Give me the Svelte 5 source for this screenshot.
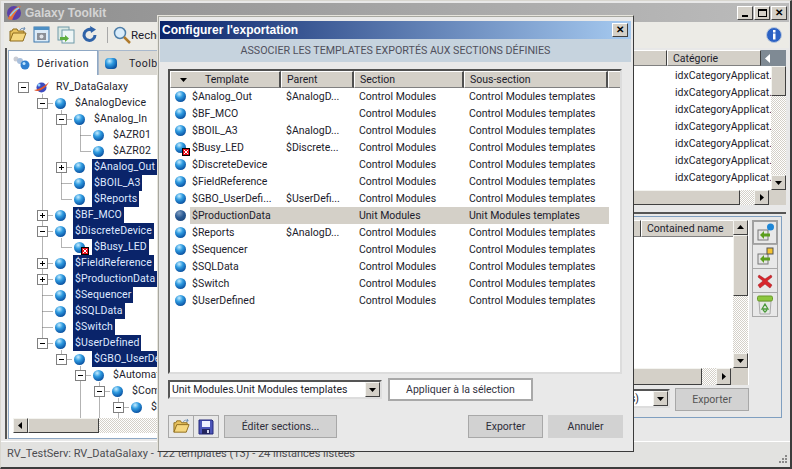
<script>
  const rowH = 16;
  const tree = [
    { level: 0, label: 'RV_DataGalaxy', box: '-', kind: 'galaxy' },
    { level: 1, label: '$AnalogDevice', box: '-' },
    { level: 2, label: '$Analog_In', box: '-' },
    { level: 3, label: '$AZR01' },
    { level: 3, label: '$AZR02' },
    { level: 2, label: '$Analog_Out', box: '+', sel: true },
    { level: 2, label: '$BOIL_A3', sel: true },
    { level: 2, label: '$Reports', sel: true },
    { level: 1, label: '$BF_MCO', box: '+', sel: true },
    { level: 1, label: '$DiscreteDevice', box: '-', sel: true },
    { level: 2, label: '$Busy_LED', sel: true, err: true },
    { level: 1, label: '$FieldReference', box: '+', sel: true },
    { level: 1, label: '$ProductionData', box: '+', sel: true },
    { level: 1, label: '$Sequencer', sel: true },
    { level: 1, label: '$SQLData', sel: true },
    { level: 1, label: '$Switch', sel: true },
    { level: 1, label: '$UserDefined', box: '-', sel: true },
    { level: 2, label: '$GBO_UserDefined', box: '-', sel: true },
    { level: 3, label: '$Automation', box: '-', tail: true },
    { level: 4, label: '$Common', box: '-', tail: true },
    { level: 5, label: '$Config', box: '-', tail: true }
  ];

  // connector lines of the tree, in px inside the tree area
  const boxX = (level) => 11 + 19 * level;
  const rowY = (i) => i * rowH + 8;
  const lines = [];
  tree.forEach((row, i) => {
    if (row.level === 0) return;
    const x = boxX(row.level);
    let j = i - 1;
    while (tree[j].level > row.level) j--;
    lines.push({ x1: x, y1: rowY(j), x2: x, y2: rowY(i) });
    lines.push({ x1: x, y1: rowY(i), x2: x + 11, y2: rowY(i) });
    if (row.tail) lines.push({ x1: x, y1: rowY(i), x2: x, y2: 400 });
  });

  const ctl = 'Control Modules';
  const ctlSub = 'Control Modules templates';
  const templates = [
    { name: '$Analog_Out', parent: '$AnalogD...', section: ctl, sub: ctlSub },
    { name: '$BF_MCO', parent: '', section: ctl, sub: ctlSub },
    { name: '$BOIL_A3', parent: '$AnalogD...', section: ctl, sub: ctlSub },
    { name: '$Busy_LED', parent: '$Discrete...', section: ctl, sub: ctlSub, err: true },
    { name: '$DiscreteDevice', parent: '', section: ctl, sub: ctlSub },
    { name: '$FieldReference', parent: '', section: ctl, sub: ctlSub },
    { name: '$GBO_UserDefi...', parent: '$UserDefi...', section: ctl, sub: ctlSub },
    { name: '$ProductionData', parent: '', section: 'Unit Modules', sub: 'Unit Modules templates', sel: true },
    { name: '$Reports', parent: '$AnalogD...', section: ctl, sub: ctlSub },
    { name: '$Sequencer', parent: '', section: ctl, sub: ctlSub },
    { name: '$SQLData', parent: '', section: ctl, sub: ctlSub },
    { name: '$Switch', parent: '', section: ctl, sub: ctlSub },
    { name: '$UserDefined', parent: '', section: ctl, sub: ctlSub }
  ];

  const categories = Array(7).fill('idxCategoryApplicat...');
</script>

{#snippet folder(size)}
  <svg width={size} height={size} viewBox="0 0 18 18">
    <path d="M1 15V5h2l1-2h4l1 2h6v2" fill="#e8c25e" stroke="#8d6b1c" />
    <path d="M1 15l3-8h13l-3 8z" fill="#f5d77f" stroke="#8d6b1c" />
    <path d="M11 4c1-2 3-2 5-1M16 3l-1-2M16 3l-2 1" fill="none" stroke="#6d8fb5" />
  </svg>
{/snippet}

{#snippet save()}
  <svg width="16" height="16" viewBox="0 0 16 16">
    <path d="M1 1h13l1 1v13H1z" fill="#4c55b8" stroke="#24297a" />
    <rect x="4" y="2" width="8" height="6" fill="#eef0ff" />
    <rect x="4" y="10" width="8" height="5" fill="#23255e" />
    <rect x="9" y="11" width="2" height="3" fill="#d5d8f0" />
  </svg>
{/snippet}

{#snippet badge()}
  <svg class="badge" width="8" height="8" viewBox="0 0 8 8">
    <rect width="8" height="8" fill="#000" />
    <rect x="1" y="1" width="6" height="6" fill="#e8101c" />
    <path d="M2 2l4 4M6 2l-4 4" stroke="#fff" />
  </svg>
{/snippet}

{#snippet arrow(dir)}
  <svg width="7" height="7" viewBox="0 0 7 7">
    {#if dir === 'up'}<path d="M0 5h7L3.5 1z" fill="#000" />{/if}
    {#if dir === 'down'}<path d="M0 2h7L3.5 6z" fill="#000" />{/if}
    {#if dir === 'left'}<path d="M5 0v7L1 3.5z" fill="#000" />{/if}
    {#if dir === 'right'}<path d="M2 0v7l4-3.5z" fill="#000" />{/if}
  </svg>
{/snippet}

<div class="window">
  <header class="titlebar">
    <svg width="16" height="16" viewBox="0 0 16 16">
      <circle cx="8" cy="8" r="7" fill="#5a3fa8" />
      <path d="M2 14C4 7 9 2 15 1 11 5 8 10 6 15z" fill="#e8743a" />
      <path d="M4 11c3-4 6-7 9-8" stroke="#8ad0f0" stroke-width="1.5" fill="none" />
    </svg>
    <span class="apptitle">Galaxy Toolkit</span>
    <div class="winbtns">
      <button class="winbtn"><i class="min"></i></button>
      <button class="winbtn"><i class="max"></i></button>
      <button class="winbtn close">✕</button>
    </div>
  </header>

  <div class="toolbar">
    <span class="tool">{@render folder(18)}</span>
    <span class="tool">
      <svg width="18" height="18" viewBox="0 0 18 18">
        <rect x="1" y="1" width="15" height="15" fill="#dcebf7" stroke="#3b77ac" />
        <rect x="1" y="1" width="15" height="3" fill="#4d8fc4" />
        <rect x="4" y="7" width="9" height="7" fill="#8b8f96" />
        <circle cx="8.5" cy="10.5" r="2" fill="#dfe3e8" />
      </svg>
    </span>
    <span class="tool">
      <svg width="18" height="18" viewBox="0 0 18 18">
        <rect x="1" y="1" width="11" height="13" fill="#dbe9e4" stroke="#6f9aa8" />
        <rect x="5" y="4" width="12" height="13" fill="#eef6f6" stroke="#6f9aa8" />
        <path d="M3 11h5V9l4 3.5L8 16v-2H3z" fill="#5fae3e" />
      </svg>
    </span>
    <span class="tool">
      <svg width="18" height="18" viewBox="0 0 18 18">
        <path d="M14 9a5.500 5.500 0 1 1-3-5" fill="none" stroke="#2f63a8" stroke-width="3" />
        <path d="M9 0l6 3.500-5 3.500z" fill="#2f63a8" />
      </svg>
    </span>
    <span class="toolsep"></span>
    <span class="tool search">
      <svg width="18" height="18" viewBox="0 0 18 18">
        <circle cx="7" cy="7" r="5.500" fill="#d9ecfa" stroke="#4e7ea8" stroke-width="1.500" />
        <path d="M11 11l6 6" stroke="#b07b2c" stroke-width="2.500" />
      </svg>
      Rechercher
    </span>
    <svg class="info" width="16" height="16" viewBox="0 0 16 16">
      <circle cx="8" cy="8" r="7.500" fill="#2c62c4" stroke="#b9c8de" />
      <rect x="7" y="6.500" width="2.500" height="6" fill="#fff" />
      <rect x="7" y="3" width="2.500" height="2.500" fill="#fff" />
    </svg>
  </div>

  <main class="body">
    <section class="leftpane">
      <div class="tabs">
        <div class="tab active">
          <svg width="18" height="14" viewBox="0 0 18 14">
            <circle cx="3" cy="3" r="2.500" fill="#c9ccd4" />
            <circle cx="7" cy="5" r="3" fill="#a9c0dc" />
            <circle cx="12" cy="9" r="4.500" fill="#2f80d0" />
            <circle cx="11" cy="7.500" r="1.500" fill="#bfe6ff" />
          </svg>
          Dérivation
        </div>
        <div class="tab">
          <span class="ball toolbox"></span>
          Toolbox
        </div>
      </div>
      <div class="treeframe">
        <div class="tree">
          <svg class="guides" width="400" height="400">
            {#each lines as l}
              <line x1={l.x1 + 0.5} y1={l.y1 + 0.5} x2={l.x2 + 0.5} y2={l.y2 + 0.5} stroke="#666" stroke-dasharray="1 1" />
            {/each}
          </svg>
          {#each tree as row}
            <div class="node" style="margin-left: {row.level * 19 + 6}px">
              <span class="boxcell">
                {#if row.box}
                  <span class="box">{#if row.box === '+'}<i class="vbar"></i>{/if}<i class="hbar"></i></span>
                {/if}
              </span>
              <span class="iconcell">
                {#if row.kind === 'galaxy'}
                  <svg width="15" height="13" viewBox="0 0 15 13">
                    <ellipse cx="7.500" cy="6.500" rx="5" ry="5" fill="#3d4bc0" />
                    <path d="M0 9C4 9 11 5 15 1 12 7 5 12 0 9z" fill="#e2562f" />
                    <circle cx="5" cy="4" r="1.500" fill="#8ed0ff" />
                  </svg>
                {:else}
                  <span class="ball"></span>
                  {#if row.err}{@render badge()}{/if}
                {/if}
              </span>
              <span class="nodelabel" class:sel={row.sel}>{row.label}</span>
            </div>
          {/each}
        </div>
        <div class="hscroll tree-h">
          <span class="sbtn">{@render arrow('left')}</span>
          <span class="thumb wide"></span>
          <span class="track"></span>
        </div>
      </div>
    </section>

    <section class="rightpane">
      <div class="catlist">
        <div class="cathead">
          <span class="headcell grow"></span>
          <span class="headcell catcol">Catégorie</span>
          <span class="headarrow">
            <svg width="7" height="9" viewBox="0 0 7 9"><path d="M6 0v9L1 4.500z" fill="#fff" /></svg>
          </span>
        </div>
        <div class="catbody">
          <div class="catrows">
            {#each categories as c}
              <div class="catrow">{c}</div>
            {/each}
          </div>
          <div class="vscroll">
            <span class="thumb catthumb"></span>
            <span class="track"></span>
            <span class="sbtn">{@render arrow('down')}</span>
          </div>
        </div>
        <div class="hscroll">
          <span class="thumb grow"></span>
          <span class="track short"></span>
          <span class="sbtn">{@render arrow('right')}</span>
          <span class="corner"></span>
        </div>
      </div>

      <div class="lower">
        <div class="groupbox">
          <div class="groupmain">
            <div class="instlist">
              <div class="instcontent">
                <div class="insthead">
                  <span class="headcell grow"></span>
                  <span class="headcell contained">Contained name</span>
                </div>
                <div class="instblank"></div>
              </div>
              <div class="vscroll inst">
                <span class="sbtn">{@render arrow('up')}</span>
                <span class="thumb instthumb"></span>
                <span class="track"></span>
                <span class="sbtn">{@render arrow('down')}</span>
              </div>
              <div class="hscroll insth">
                <span class="thumb grow"></span>
                <span class="track short"></span>
                <span class="sbtn">{@render arrow('right')}</span>
                <span class="corner"></span>
              </div>
            </div>
            <div class="exportrow">
              <div class="combo lowcombo">
                <span class="combotext">(toutes les instances)</span>
                <span class="sbtn">{@render arrow('down')}</span>
              </div>
              <button class="flat bordered lowexport">Exporter</button>
            </div>
          </div>
          <div class="sidebtns">
            <button class="side current">
              <svg width="20" height="20" viewBox="0 0 20 20">
                <rect x="3" y="7" width="10" height="10" fill="#e6e6e6" stroke="#777" />
                <path d="M5 12l4-4v2.500h6v3H9V16z" fill="#5c9e1e" />
                <circle cx="15.500" cy="4" r="3.500" fill="#1d86d6" />
              </svg>
            </button>
            <button class="side">
              <svg width="20" height="20" viewBox="0 0 20 20">
                <rect x="3" y="7" width="10" height="10" fill="#e6e6e6" stroke="#777" />
                <path d="M5 12l4-4v2.500h6v3H9V16z" fill="#5c9e1e" />
                <rect x="12" y="1" width="6" height="6" fill="#f5c330" stroke="#555" />
              </svg>
            </button>
            <button class="side">
              <svg width="18" height="18" viewBox="0 0 18 18">
                <path d="M3 3l6 4 6-4 1 2-5 4 5 4-2 3-5-4-5 4-2-3 5-4-5-4z" fill="#d8262c" stroke="#9a1a1e" stroke-width=".5" />
              </svg>
            </button>
            <button class="side">
              <svg width="18" height="20" viewBox="0 0 18 20">
                <path d="M3 6h12l-1 13H4z" fill="#e4e8e4" stroke="#aaa" />
                <rect x="1.500" y="1" width="15" height="5" rx="1.500" fill="#8cc63e" stroke="#6a9a2a" />
                <path d="M9 9l3 5H6zM7 15l2 2 2-2" fill="none" stroke="#4a9a3a" stroke-width="1.300" />
              </svg>
            </button>
          </div>
        </div>
      </div>
    </section>
  </main>

  <footer class="status">
    RV_TestServ: RV_DataGalaxy - 122 templates (13) - 24 instances listées
    <svg class="grip" width="11" height="11" viewBox="0 0 11 11">
      <path d="M8 1h2v2H8zM5 4h2v2H5zM8 4h2v2H8zM2 7h2v2H2zM5 7h2v2H5zM8 7h2v2H8z" fill="#8a8a8a" />
    </svg>
  </footer>

  <div class="dialog">
    <div class="dlgtitle">
      <span>Configurer l'exportation</span>
      <button class="winbtn dlgclose">✕</button>
    </div>
    <div class="dlghead">ASSOCIER LES TEMPLATES EXPORTÉS AUX SECTIONS DÉFINIES</div>
    <div class="dlgcontent">
      <div class="grid">
        <div class="gridrow gridhead">
          <span class="hc first"><i class="sort">{@render arrow('down')}</i>Template</span>
          <span class="hc">Parent</span>
          <span class="hc">Section</span>
          <span class="hc">Sous-section</span>
          <span class="hc last"></span>
        </div>
        {#each templates as t}
          <div class="gridrow item" class:picked={t.sel}>
            <span class="c first">
              <span class="iconcell gridicon">
                <span class="ball" class:dim={t.sel}></span>
                {#if t.err}{@render badge()}{/if}
              </span>
              <span class="nametext">{t.name}</span>
            </span>
            <span class="c">{t.parent}</span>
            <span class="c">{t.section}</span>
            <span class="c">{t.sub}</span>
          </div>
        {/each}
      </div>

      <div class="applyrow">
        <div class="combo dlgcombo">
          <span class="combotext">Unit Modules.Unit Modules templates</span>
          <span class="sbtn">{@render arrow('down')}</span>
        </div>
        <button class="apply">Appliquer à la sélection</button>
      </div>

      <div class="actions">
        <div class="iconbtns">
          <button class="iconbtn">{@render folder(17)}</button>
          <button class="iconbtn">{@render save()}</button>
        </div>
        <button class="flat bordered editsec">Éditer sections...</button>
        <span class="spacer"></span>
        <button class="flat bordered dlgbtn">Exporter</button>
        <button class="flat dlgbtn">Annuler</button>
      </div>
    </div>
  </div>
</div>

<style>
  :global(body) {
    margin: 0;
  }

  .window {
    position: relative;
    width: 792px;
    height: 469px;
    box-sizing: border-box;
    display: flex;
    flex-direction: column;
    overflow: hidden;
    background: #e8e8e8;
    border: 1px solid #d8d6cf;
    border-right: 2px solid #3c3c3c;
    border-bottom: 2px solid #3c3c3c;
    padding: 2px 1px 0 3px;
    font: 10.5px Roboto, "Liberation Sans", Arial, sans-serif;
    color: #1c1c2c;
  }

  button {
    font: inherit;
    color: inherit;
    padding: 0;
  }

  .grow {
    flex: 1;
  }

  /* title bar */
  .titlebar {
    height: 19px;
    flex: none;
    display: flex;
    align-items: center;
    gap: 3px;
    padding-left: 2px;
    background: linear-gradient(90deg, #8e8e8e, #bcbcbc);
  }

  .apptitle {
    font: 700 12px "Liberation Sans", Arial, sans-serif;
    color: #d4d4d4;
  }

  .winbtns {
    margin-left: auto;
    display: flex;
    gap: 1px;
    margin-right: 2px;
  }

  .winbtn {
    width: 16px;
    height: 14px;
    box-sizing: border-box;
    display: flex;
    align-items: center;
    justify-content: center;
    background: #d4d0c8;
    border: 1px solid;
    border-color: #fff #404040 #404040 #fff;
    font-size: 10px;
    font-weight: 700;
    line-height: 1;
    color: #000;
  }

  .min {
    width: 6px;
    height: 2px;
    background: #000;
    margin-top: 6px;
  }

  .max {
    width: 9px;
    height: 8px;
    box-sizing: border-box;
    border: 1px solid #000;
    border-top-width: 2px;
  }

  /* toolbar */
  .toolbar {
    height: 26px;
    flex: none;
    display: flex;
    align-items: center;
    gap: 6px;
    padding: 0 0 0 5px;
    background: #ecebe6;
    font-size: 11.5px;
  }

  .tool {
    display: flex;
    align-items: center;
  }

  .toolsep {
    width: 1px;
    height: 16px;
    background: #a8a8a8;
    margin-left: 2px;
    margin-right: -1px;
  }

  .info {
    margin-left: auto;
    margin-right: 7px;
  }

  /* main area */
  .body {
    flex: 1;
    min-height: 0;
    display: flex;
    padding-left: 1px;
  }

  .leftpane {
    width: 396px;
    height: 391px;
    box-sizing: border-box;
    display: flex;
    flex-direction: column;
    border-left: 2px solid #555;
    padding: 2px 0 0 1px;
    background: #ecebe6;
  }

  .tabs {
    display: flex;
    height: 25px;
    flex: none;
  }

  .tab {
    width: 90px;
    display: flex;
    align-items: center;
    gap: 6px;
    box-sizing: border-box;
    padding-left: 6px;
    background: #dcdad4;
    letter-spacing: 0.5px;
    border: 1px solid #a8b8cc;
    border-bottom: 0;
  }

  .tab.active {
    background: #fff;
    padding-left: 4px;
    border-color: #8fa8c4;
  }

  .treeframe {
    flex: 1;
    min-height: 0;
    display: flex;
    flex-direction: column;
    background: #fff;
    border: 1px solid #8fa8c4;
    border-top: 0;
    padding: 0 0 5px 3px;
  }

  .tree {
    position: relative;
    flex: 1;
    min-height: 0;
    overflow: hidden;
    padding-top: 4px;
  }

  .guides {
    position: absolute;
    left: 0;
    top: 4px;
  }

  .node {
    position: relative;
    height: 16px;
    display: flex;
    align-items: center;
  }

  .boxcell {
    width: 11px;
    flex: none;
    margin-right: 5px;
    display: flex;
    justify-content: center;
  }

  .box {
    position: relative;
    width: 9px;
    height: 9px;
    background: #fff;
    border: 1px solid #808080;
  }

  .hbar {
    position: absolute;
    left: 2px;
    top: 4px;
    width: 5px;
    height: 1px;
    background: #000;
  }

  .vbar {
    position: absolute;
    left: 4px;
    top: 2px;
    width: 1px;
    height: 5px;
    background: #000;
  }

  .iconcell {
    position: relative;
    width: 15px;
    height: 14px;
    flex: none;
    display: flex;
    align-items: center;
    justify-content: center;
    background: #fff;
  }

  .ball {
    width: 11px;
    height: 11px;
    border-radius: 50%;
    flex: none;
    background: radial-gradient(circle at 38% 28%, #c4ecff 0, #2f9be0 35%, #0f5cab 70%, #0a3a78 100%);
  }

  .ball.toolbox {
    width: 12px;
    height: 11px;
    border-radius: 4px;
    margin-right: 6px;
  }

  .ball.dim {
    background: radial-gradient(circle at 38% 28%, #7e9cc0 0, #2a5a94 45%, #163a6c 100%);
  }

  .badge {
    position: absolute;
    right: -2px;
    bottom: -1px;
  }

  .nodelabel {
    height: 16px;
    line-height: 16px;
    margin-left: 5px;
    padding: 0 2px;
    white-space: nowrap;
    position: relative;
    background: #fff;
    letter-spacing: 0.1px;
  }

  .nodelabel.sel {
    background: #0a246a;
    color: #dfe8ff;
  }

  /* scrollbars */
  .hscroll {
    display: flex;
    height: 15px;
    flex: none;
    background: #d4d0c8;
  }

  .tree-h {
    margin-right: 3px;
    margin-left: 1px;
  }

  .vscroll {
    width: 15px;
    flex: none;
    display: flex;
    flex-direction: column;
  }

  .sbtn,
  .thumb {
    box-sizing: border-box;
    background: #d4d0c8;
    border: 1px solid;
    border-color: #f4f4f0 #404040 #404040 #f4f4f0;
  }

  .sbtn {
    width: 15px;
    height: 15px;
    flex: none;
    display: flex;
    align-items: center;
    justify-content: center;
  }

  .thumb.wide {
    width: 71px;
  }

  .catthumb {
    height: 30px;
  }

  .instthumb {
    height: 61px;
  }

  .track {
    flex: 1;
    background: repeating-conic-gradient(#d4d0c8 0 25%, #fff 0 50%) 0 0 / 2px 2px;
  }

  .track.short {
    flex: none;
    width: 14px;
  }

  .corner {
    width: 17px;
    flex: none;
    background: #d4d0c8;
  }

  /* right part */
  .rightpane {
    flex: 1;
    min-width: 0;
    height: 391px;
    display: flex;
    flex-direction: column;
    padding: 2px 3px 0 0;
    box-sizing: border-box;
  }

  .catlist {
    height: 155px;
    flex: none;
    display: flex;
    flex-direction: column;
  }

  .cathead {
    height: 16px;
    flex: none;
    display: flex;
    background: #d4d0c8;
  }

  .headcell {
    display: flex;
    align-items: center;
    box-sizing: border-box;
    background: #d4d0c8;
    border: 1px solid;
    border-color: #fff #404040 #808080 #fff;
  }

  .catcol {
    width: 94px;
    padding-left: 5px;
  }

  .headarrow {
    width: 25px;
    flex: none;
    display: flex;
    align-items: center;
    padding-left: 3px;
    box-sizing: border-box;
    background: #7f8a94;
  }

  .catbody {
    flex: 1;
    min-height: 0;
    display: flex;
    background: #fff;
  }

  .catrows {
    flex: 1;
    overflow: hidden;
    padding: 1px 0 0 274px;
  }

  .catrow {
    height: 17px;
    line-height: 17px;
    white-space: nowrap;
  }

  .lower {
    margin-top: 7px;
    flex: 1;
    min-height: 0;
    border-top: 2px solid #555;
    padding: 2px 4px 0 0;
  }

  .groupbox {
    height: 202px;
    box-sizing: border-box;
    display: flex;
    gap: 3px;
    border: 1px solid #7f9fc0;
    border-left: 0;
    padding: 3px 3px 0 0;
  }

  .groupmain {
    flex: 1;
    min-width: 0;
    display: flex;
    flex-direction: column;
  }

  .instlist {
    height: 165px;
    flex: none;
    display: grid;
    grid-template-columns: 1fr 15px;
    grid-template-rows: 1fr 17px;
    background: #fff;
    padding-right: 1px;
    box-sizing: border-box;
  }

  .instcontent {
    display: flex;
    flex-direction: column;
    min-width: 0;
  }

  .insthead {
    height: 17px;
    flex: none;
    display: flex;
  }

  .contained {
    width: 92px;
    padding-left: 5px;
    border-width: 1px 0 1px 1px;
  }

  .instblank {
    flex: 1;
  }

  .insth {
    grid-column: 1 / 3;
    height: 17px;
  }

  .insth .sbtn {
    height: 17px;
  }

  .exportrow {
    margin-top: 4px;
    display: flex;
    align-items: flex-start;
    gap: 5px;
  }

  .combo {
    display: flex;
    align-items: center;
    height: 19px;
    box-sizing: border-box;
    background: #fff;
    border: 2px solid;
    border-color: #555 #ddd #ddd #555;
    overflow: hidden;
  }

  .combotext {
    flex: 1;
    min-width: 0;
    padding-left: 2px;
    white-space: nowrap;
  }

  .lowcombo {
    flex: 1;
    min-width: 0;
    justify-content: flex-end;
  }

  .lowcombo .combotext {
    text-align: right;
    padding-right: 14px;
  }

  .flat {
    background: #d2d2d2;
    border: 1px solid #d2d2d2;
    box-sizing: border-box;
    color: #2e2e3a;
  }

  .bordered {
    border-color: #a8a8a8;
  }

  .lowexport {
    width: 74px;
    height: 23px;
    margin-top: -1px;
    flex: none;
    color: #555;
  }

  .sidebtns {
    width: 26px;
    flex: none;
    display: flex;
    flex-direction: column;
  }

  .side {
    height: 25px;
    box-sizing: border-box;
    display: flex;
    align-items: center;
    justify-content: center;
    background: #e8e8e8;
    border: 1px solid #a8a8a8;
    margin-top: -1px;
  }

  .side:first-child {
    margin-top: 0;
    border: 2px solid #a0a0a0;
  }

  .status {
    height: 23px;
    flex: none;
    display: flex;
    align-items: center;
    justify-content: space-between;
    background: #e2e2e0;
    border-top: 1px solid #fff;
    margin-left: -3px;
    margin-right: -1px;
    padding: 0 0 2px 6px;
    color: #4c4c50;
    font-size: 11px;
  }

  .grip {
    align-self: flex-end;
    margin: 0 2px 0 0;
  }

  /* dialog, floats over the main window */
  .dialog {
    position: absolute;
    left: 156px;
    top: 14px;
    width: 477px;
    height: 437px;
    box-sizing: border-box;
    display: flex;
    flex-direction: column;
    background: #e9e9e9;
    border: 1px solid;
    border-color: #e6e4dc #3a3a3a #3a3a3a #e6e4dc;
    padding: 5px 2px 0 2px;
    box-shadow: inset 1px 1px 0 #a8a8a0;
  }

  .dlgtitle {
    height: 18px;
    flex: none;
    display: flex;
    align-items: center;
    justify-content: space-between;
    padding: 0 3px 0 2px;
    background: linear-gradient(90deg, #0a246a, #a6caf0);
    color: #fff;
    font: 700 12px "Liberation Sans", Arial, sans-serif;
  }

  .dlghead {
    height: 23px;
    flex: none;
    text-align: center;
    line-height: 24px;
    background: #c6d3de;
    color: #50505c;
    font-size: 10.7px;
  }

  .dlgcontent {
    flex: 1;
    display: flex;
    flex-direction: column;
    padding: 7px 8px 0 8px;
  }

  .grid {
    height: 305px;
    flex: none;
    box-sizing: border-box;
    margin-right: 1px;
    background: #fff;
    border: 2px solid;
    border-color: #505050 #dcdcdc #dcdcdc #505050;
    padding-right: 11px;
    overflow: hidden;
  }

  .gridrow {
    display: grid;
    grid-template-columns: 111px 73px 110px 1fr;
    align-items: center;
    white-space: nowrap;
  }

  .gridhead {
    grid-template-columns: 111px 73px 110px 1fr 12px;
    height: 17px;
    margin-right: -11px;
  }

  .hc {
    height: 17px;
    box-sizing: border-box;
    display: flex;
    align-items: center;
    padding-left: 5px;
    background: #d4d0c8;
    border-right: 2px solid #505050;
    border-bottom: 1px solid #808080;
    border-left: 1px solid #fff;
    border-top: 1px solid #fff;
  }

  .hc.first {
    padding-left: 9px;
  }

  .hc.last {
    border-right: 0;
  }

  .sort {
    display: flex;
    width: 25px;
    flex: none;
  }

  .item {
    height: 17px;
  }

  .c {
    padding-left: 5px;
    height: 17px;
    line-height: 17px;
    overflow: hidden;
  }

  .c.first {
    display: flex;
    align-items: center;
    padding-left: 3px;
  }

  .gridicon {
    width: 15px;
    margin-right: 4px;
    background: transparent;
  }

  .picked {
    background: linear-gradient(90deg, #fff 20px, #d4d0c8 20px);
  }

  .applyrow {
    margin-top: 4px;
    display: flex;
    align-items: flex-start;
    gap: 6px;
  }

  .dlgcombo {
    width: 214px;
    margin-top: 2px;
  }

  .apply {
    width: 145px;
    height: 23px;
    box-sizing: border-box;
    background: #fff;
    border: 2px solid #a8a8a8;
    color: #33333f;
  }

  .actions {
    margin-top: 14px;
    display: flex;
    gap: 5px;
  }

  .iconbtns {
    display: flex;
  }

  .iconbtn {
    width: 26px;
    height: 23px;
    box-sizing: border-box;
    display: flex;
    align-items: center;
    justify-content: center;
    background: #e8e8e8;
    border: 1px solid #a8a8a8;
    margin-right: -1px;
  }

  .editsec {
    width: 113px;
    height: 23px;
    margin-left: 1px;
  }

  .spacer {
    flex: 1;
  }

  .dlgbtn {
    width: 75px;
    height: 23px;
  }
</style>
